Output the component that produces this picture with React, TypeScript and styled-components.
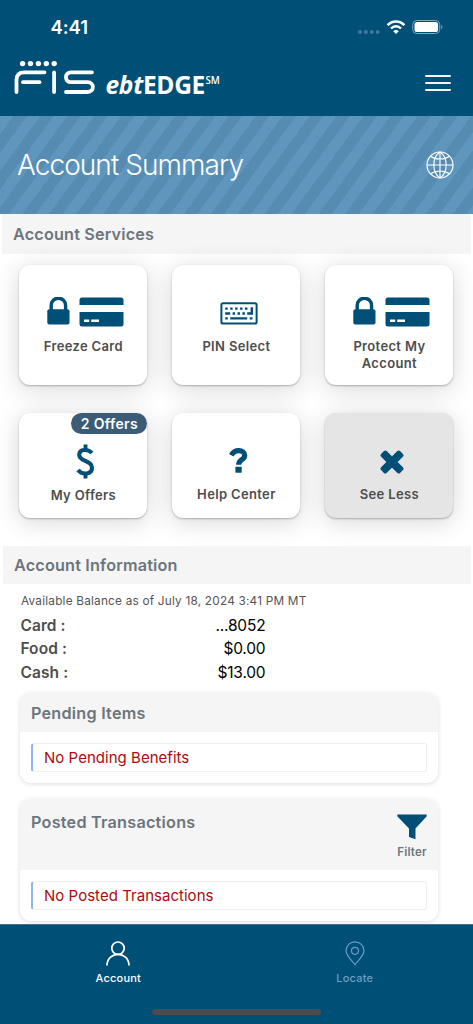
import React from "react";
import styled, { createGlobalStyle } from "styled-components";

const navy = "#004f77";
const slate = "#6c757d";

const GlobalStyle = createGlobalStyle`
  * { box-sizing: border-box; }
  body { margin: 0; background: #fff; font-family: Inter, "Liberation Sans", sans-serif; }
  svg { display: block; flex: none; }
`;

const Screen = styled.div`
  width: 473px;
  height: 1024px;
  display: flex;
  flex-direction: column;
  overflow: hidden;
  background: #fff;
`;

const Header = styled.header`
  height: 116px;
  flex: none;
  background: ${navy};
  color: #fff;
  display: flex;
  flex-direction: column;
`;

const StatusBar = styled.div`
  height: 54px;
  padding: 0 30px 0 50.5px;
  display: flex;
  align-items: center;
  justify-content: space-between;
`;

const Clock = styled.span`
  font-size: 18.5px;
  line-height: 22px;
  font-weight: 600;
  letter-spacing: -0.05px;
`;

const BrandBar = styled.div`
  height: 62px;
  padding: 5px 22px 0 14px;
  display: flex;
  align-items: flex-start;
  justify-content: space-between;
`;

const Brand = styled.div`
  display: flex;
  gap: 10.5px;
`;

const Product = styled.div`
  margin-top: 8.5px;
  font-family: "Open Sans", "Noto Sans", sans-serif;
  font-size: 24.5px;
  line-height: 34px;
  font-weight: 700;
  letter-spacing: -0.3px;
  white-space: nowrap;
  display: flex;
`;

const ServiceMark = styled.span`
  font-size: 9.8px;
  line-height: 12px;
  font-weight: 600;
  letter-spacing: -0.1px;
  margin: 7px 0 0 0.5px;
`;

const MenuButton = styled.div`
  margin-top: 16px;
  width: 26px;
  height: 16px;
  display: flex;
  flex-direction: column;
  justify-content: space-between;
`;

const MenuLine = styled.span`
  height: 2px;
  background: #f4f4fa;
  border-radius: 1px;
`;

const Banner = styled.div`
  height: 98px;
  flex: none;
  padding: 0 19px 0 17px;
  display: flex;
  align-items: center;
  justify-content: space-between;
  color: #fff;
  background: repeating-linear-gradient(
    126.3deg,
    #5f96bd 0,
    #5f96bd 10.85px,
    #578cb2 10.85px,
    #578cb2 21.7px
  );
`;

const Title = styled.h1`
  margin: 0;
  font-size: 28px;
  line-height: 36px;
  font-weight: 350;
  letter-spacing: -0.95px;
  white-space: nowrap;
`;

const SectionBar = styled.h2<{ $height: number; $inset: number; $pad: number }>`
  margin: 0 2px 0 ${(p) => p.$inset}px;
  height: ${(p) => p.$height}px;
  flex: none;
  padding: 0 ${(p) => p.$pad}px;
  display: flex;
  align-items: center;
  background: #f5f5f5;
  color: ${slate};
  font-size: 16.2px;
  font-weight: 600;
  letter-spacing: 0.18px;
`;

const Services = styled.div`
  flex: none;
  height: 291.5px;
  padding: 11px 19.6px 0 19.4px;
  display: grid;
  grid-template-columns: repeat(3, 128px);
  grid-template-rows: 120px 104.5px;
  justify-content: space-between;
  row-gap: 28px;
`;

const Tile = styled.div<{ $muted?: boolean; $top: number }>`
  position: relative;
  border-radius: 11px;
  background: ${(p) => (p.$muted ? "#e5e5e5" : "#fff")};
  box-shadow: 0 1px 2px rgba(0, 0, 0, 0.28), 0 4px 26px rgba(0, 0, 0, 0.16);
  padding-top: ${(p) => p.$top}px;
  display: flex;
  flex-direction: column;
  align-items: center;
`;

const TileIcon = styled.div<{ $height: number }>`
  height: ${(p) => p.$height}px;
  padding-left: 4.4px;
  display: flex;
  align-items: flex-start;
  gap: 9px;
`;

const TileLabel = styled.span`
  color: #4d4d4d;
  font-size: 13px;
  line-height: 17px;
  font-weight: 600;
  letter-spacing: 0.35px;
  text-align: center;
`;

const OfferBadge = styled.span`
  position: absolute;
  top: 0;
  right: 0;
  width: 76px;
  height: 21px;
  border-radius: 11px;
  background: #3a5c76;
  color: #fff;
  font-size: 14px;
  line-height: 21px;
  font-weight: 600;
  letter-spacing: 0.35px;
  text-align: center;
`;

const Balance = styled.div`
  flex: none;
  height: 109px;
  padding: 8px 0 0 21px;
`;

const AsOf = styled.div`
  color: #555;
  font-size: 11.8px;
  line-height: 18px;
  letter-spacing: 0.21px;
  margin-bottom: 4px;
`;

const BalanceRow = styled.div`
  width: 245px;
  height: 23.3px;
  margin-left: -0.6px;
  display: flex;
  align-items: center;
  justify-content: space-between;
  font-size: 15.5px;
`;

const BalanceName = styled.span`
  color: #4d4d4d;
  font-weight: 600;
  letter-spacing: 0.1px;
`;

const BalanceValue = styled.span`
  color: #000;
  letter-spacing: -0.2px;
`;

const Panel = styled.section`
  flex: none;
  margin: 0 35px 16.5px 20px;
  border-radius: 11px;
  background: #fff;
  box-shadow: 0 1px 5px rgba(0, 0, 0, 0.14);
  overflow: hidden;

  &:last-of-type {
    margin-bottom: 0;
  }
`;

const PanelHead = styled.div<{ $height: number; $top: number }>`
  height: ${(p) => p.$height}px;
  padding: ${(p) => p.$top}px 11px 0;
  background: #f5f5f5;
  display: flex;
  justify-content: space-between;
  align-items: flex-start;
`;

const PanelTitle = styled.h3`
  margin: 0;
  color: ${slate};
  font-size: 16.2px;
  line-height: 20px;
  font-weight: 600;
  letter-spacing: 0.24px;
`;

const FilterButton = styled.div`
  margin-top: 1.5px;
  display: flex;
  flex-direction: column;
  align-items: center;
  gap: 5px;
  color: ${slate};
  font-size: 11.5px;
  line-height: 14px;
  font-weight: 600;
  letter-spacing: 0.2px;
`;

const Notice = styled.div`
  margin: 11px;
  height: 28.5px;
  padding-left: 11px;
  border: 1px solid #f0f0f0;
  border-left: 2px solid #92b5ef;
  border-radius: 3px;
  color: #ab0b10;
  display: flex;
  align-items: center;
  font-size: 15px;
  letter-spacing: 0.03px;
`;

const TabBar = styled.nav`
  margin-top: auto;
  flex: none;
  height: 100px;
  padding-top: 16px;
  background: ${navy};
  border-top: 1px solid #3f7391;
  display: grid;
  grid-template-columns: 1fr 1fr;
  grid-template-rows: 68px 6px;
  justify-items: center;
`;

const Tab = styled.div<{ $active?: boolean }>`
  color: ${(p) => (p.$active ? "#fff" : "#6c9fc6")};
  display: flex;
  flex-direction: column;
  align-items: center;
  gap: 5px;
  font-size: 11px;
  line-height: 14px;
  font-weight: 500;
  letter-spacing: 0.2px;
`;

const HomeIndicator = styled.div`
  grid-column: 1 / -1;
  width: 169px;
  height: 6px;
  border-radius: 3px;
  background: #4b4c4e;
`;

const StatusIcons = () => (
  <svg width="86" height="20" viewBox="357 17 86 20" fill="none">
    {[360, 365.8, 371.7, 377.6].map((x) => (
      <circle key={x} cx={x} cy="32" r="2" fill="#42799a" />
    ))}
    <path d="M387.6 25.2C392.3 20.2 399.7 20.2 404.4 25.2" stroke="#fff" strokeWidth="2.5" />
    <path d="M391 28.5C393.9 25.5 398.1 25.5 401 28.5" stroke="#fff" strokeWidth="2.4" />
    <path d="M396 34L393.2 31.2C394.8 29.7 397.2 29.7 398.8 31.2Z" fill="#fff" />
    <rect x="412.7" y="20.5" width="27" height="13" rx="4" stroke="#7fa4b9" />
    <rect x="414.5" y="22" width="23.6" height="10" rx="2.6" fill="#fff" />
    <path d="M441.2 25V29.3C442.8 28.6 442.8 25.7 441.2 25Z" fill="#7fa4b9" />
  </svg>
);

const FisLogo = () => (
  <svg width="81" height="36" viewBox="14 59 81 36" fill="none" stroke="#fff" strokeWidth="3.8" strokeLinecap="round">
    {[22.6, 30.5, 38.4, 46.3, 54.2].map((x) => (
      <circle key={x} cx={x} cy="63.6" r="2.7" fill="#fff" stroke="none" />
    ))}
    <path d="M16.5 92V80Q16.5 72.3 24.2 72.3H44.5" />
    <path d="M23 82.2H39.5" />
    <path d="M54.1 72.4V92" />
    <path d="M92 72.3H71C64.3 72.3 64.3 82.2 71 82.2H87.5C94.7 82.2 94.7 92 87.5 92H66" />
  </svg>
);

const Globe = () => (
  <svg width="28" height="28" viewBox="0 0 28 28" fill="none" stroke="#fff" strokeWidth="1.15">
    <circle cx="14" cy="14" r="13" />
    <path d="M14 1V27M1 14H27M4.6 5.2C9.5 8.9 18.5 8.9 23.4 5.2M4.6 22.8C9.5 19.1 18.5 19.1 23.4 22.8" />
    <path d="M14 1C5.8 6.6 5.8 21.4 14 27C22.2 21.4 22.2 6.6 14 1Z" />
  </svg>
);

const LockAndCard = () => (
  <>
    <svg width="23" height="28" viewBox="0 0 23 28">
      <path d="M4.2 14V8.4a7.2 7.2 0 0 1 14.4 0V14" fill="none" stroke={navy} strokeWidth="3.4" />
      <rect x=".3" y="12.3" width="22.2" height="15.2" rx="2" fill={navy} />
    </svg>
    <svg width="45" height="30" viewBox="0 0 45 30">
      <path d="M.5 8V3Q.5.5 3 .5H42Q44.5.5 44.5 3V8Z" fill={navy} />
      <path d="M.5 15H44.5V27Q44.5 29.5 42 29.5H3Q.5 29.5.5 27Z" fill={navy} />
      <path d="M5 23.8H10.2M12.2 23.8H20" stroke="#fff" strokeWidth="2.6" />
    </svg>
  </>
);

const Keyboard = () => (
  <svg width="38" height="23" viewBox="0 0 38 23" fill="none" stroke={navy}>
    <rect x="1.4" y="1.3" width="35.2" height="20.3" rx="1.6" strokeWidth="2" />
    <path d="M5.2 6.6H29" strokeWidth="2.4" strokeDasharray="2.5 2.45" />
    <path d="M5.2 11.5H10.2M12.6 11.5H15.1M17.5 11.5H20M22.4 11.5H24.9" strokeWidth="2.4" />
    <path d="M27.2 11.5H31.8V5.3" strokeWidth="2.4" />
    <path d="M5.2 16.4H7.8M10.2 16.4H27.2M29.7 16.4H32.5" strokeWidth="2.3" />
  </svg>
);

const Dollar = () => (
  <svg width="19" height="35" viewBox="0 0 19 35" fill="none" stroke={navy}>
    <path d="M9.5.5V6M9.5 29V34.5" strokeWidth="3.9" strokeLinecap="butt" />
    <path
      d="M15.9 9C12.6 5 3.2 4.3 3.2 10.9C3.2 18 16 15.7 16 23.7C16 30.8 6 31.2 2 26.1"
      strokeWidth="4.1"
    />
  </svg>
);

const Question = () => (
  <svg width="19" height="25" viewBox="0 0 19 25">
    <path
      d="M2.3 7.2C4 4.2 6.3 2.7 9.7 2.7C13.4 2.7 15.7 4.8 15.7 7.4C15.7 12.1 9.6 11.1 9.6 16.7"
      fill="none"
      stroke={navy}
      strokeWidth="5.2"
    />
    <rect x="6.4" y="18.7" width="6.3" height="6" rx=".6" fill={navy} />
  </svg>
);

const Cross = () => (
  <svg width="24" height="24" viewBox="0 0 24 24" fill={navy}>
    <rect x="-1.4" y="8.1" width="26.8" height="7.8" rx="1.9" transform="rotate(45 12 12)" />
    <rect x="-1.4" y="8.1" width="26.8" height="7.8" rx="1.9" transform="rotate(-45 12 12)" />
  </svg>
);

const Funnel = () => (
  <svg width="30" height="26" viewBox="0 0 30 26">
    <path d="M.3.5H29.7V2.2L18.5 14.5V25.3L12 23.1V14.5L.3 2.2Z" fill={navy} />
  </svg>
);

const Person = () => (
  <svg width="24" height="25" viewBox="0 0 24 25" fill="none" stroke="currentColor" strokeWidth="1.7">
    <circle cx="12" cy="7.2" r="6.2" />
    <path d="M1 24.4C1.3 9.8 22.7 9.8 23 24.4" />
  </svg>
);

const Pin = () => (
  <svg width="20" height="25" viewBox="0 0 20 25" fill="none" stroke="currentColor" strokeWidth="1.2">
    <path d="M10 23.7C6.5 19.4 1 14.3 1 9.8A9 9 0 0 1 19 9.8C19 14.3 13.5 19.4 10 23.7Z" />
    <circle cx="10" cy="9.8" r="3.5" />
  </svg>
);

const balances = [
  ["Card :", "...8052"],
  ["Food :", "$0.00"],
  ["Cash :", "$13.00"],
];

export default function App() {
  return (
    <Screen>
      <GlobalStyle />
      <Header>
        <StatusBar>
          <Clock>4:41</Clock>
          <StatusIcons />
        </StatusBar>
        <BrandBar>
          <Brand>
            <FisLogo />
            <Product>
              <em>ebt</em>EDGE<ServiceMark>SM</ServiceMark>
            </Product>
          </Brand>
          <MenuButton>
            <MenuLine />
            <MenuLine />
            <MenuLine />
          </MenuButton>
        </BrandBar>
      </Header>
      <Banner>
        <Title>Account Summary</Title>
        <Globe />
      </Banner>
      <SectionBar $height={40} $inset={2} $pad={11}>Account Services</SectionBar>
      <Services>
        <Tile $top={32}>
          <TileIcon $height={41}><LockAndCard /></TileIcon>
          <TileLabel>Freeze Card</TileLabel>
        </Tile>
        <Tile $top={37}>
          <TileIcon $height={36}><Keyboard /></TileIcon>
          <TileLabel>PIN Select</TileLabel>
        </Tile>
        <Tile $top={32}>
          <TileIcon $height={41}><LockAndCard /></TileIcon>
          <TileLabel>Protect My<br />Account</TileLabel>
        </Tile>
        <Tile $top={31}>
          <OfferBadge>2 Offers</OfferBadge>
          <TileIcon $height={43}><Dollar /></TileIcon>
          <TileLabel>My Offers</TileLabel>
        </Tile>
        <Tile $top={35}>
          <TileIcon $height={38}><Question /></TileIcon>
          <TileLabel>Help Center</TileLabel>
        </Tile>
        <Tile $top={37} $muted>
          <TileIcon $height={36}><Cross /></TileIcon>
          <TileLabel>See Less</TileLabel>
        </Tile>
      </Services>
      <SectionBar $height={38.5} $inset={3} $pad={11}>Account Information</SectionBar>
      <Balance>
        <AsOf>Available Balance as of July 18, 2024 3:41 PM MT</AsOf>
        {balances.map(([name, value]) => (
          <BalanceRow key={name}>
            <BalanceName>{name}</BalanceName>
            <BalanceValue>{value}</BalanceValue>
          </BalanceRow>
        ))}
      </Balance>
      <Panel>
        <PanelHead $height={39} $top={10}>
          <PanelTitle>Pending Items</PanelTitle>
        </PanelHead>
        <Notice>No Pending Benefits</Notice>
      </Panel>
      <Panel>
        <PanelHead $height={71} $top={13}>
          <PanelTitle>Posted Transactions</PanelTitle>
          <FilterButton>
            <Funnel />
            Filter
          </FilterButton>
        </PanelHead>
        <Notice>No Posted Transactions</Notice>
      </Panel>
      <TabBar>
        <Tab $active>
          <Person />
          Account
        </Tab>
        <Tab>
          <Pin />
          Locate
        </Tab>
        <HomeIndicator />
      </TabBar>
    </Screen>
  );
}
